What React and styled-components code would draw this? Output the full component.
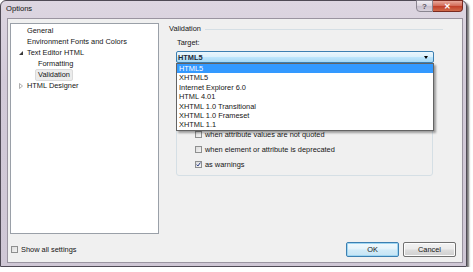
import React from 'react'
import styled, { createGlobalStyle } from 'styled-components'

const GlobalStyle = createGlobalStyle`
  html, body {
    margin: 0;
    padding: 0;
    background: #ffffff;
  }
  body {
    font-family: "Liberation Sans", Arial, sans-serif;
    font-size: 7.4px;
    color: #151515;
  }
`

const targets = [
  'HTML5',
  'XHTML5',
  'Internet Explorer 6.0',
  'HTML 4.01',
  'XHTML 1.0 Transitional',
  'XHTML 1.0 Frameset',
  'XHTML 1.1',
]

const Window = styled.div`
  width: 465px;
  height: 265px;
  border: 1px solid #4f4a55;
  border-radius: 6px 6px 0 0;
  background: linear-gradient(180deg, #ddd6e1 0%, #d2cad8 30%, #cfc7d5 100%);
  box-shadow: 2px 2px 2px rgba(0, 0, 0, 0.55);
  display: flex;
  flex-direction: column;
`

const TitleBar = styled.div`
  height: 17px;
  display: flex;
  align-items: flex-start;
  padding-left: 5px;
`

const Title = styled.span`
  line-height: 16px;
  font-size: 7.6px;
  color: #111;
`

const CaptionButtons = styled.div`
  margin-left: auto;
  margin-right: 3px;
  margin-top: -1px;
  display: flex;
`

const CaptionButton = styled.div`
  width: ${p => (p.close ? '30px' : '17px')};
  height: 12px;
  box-sizing: border-box;
  border: 1px solid ${p => (p.close ? '#7a2a20' : '#8a8590')};
  border-left: ${p => (p.close ? 'none' : '1px solid #8a8590')};
  border-radius: ${p => (p.close ? '0 0 4px 0' : '0 0 0 4px')};
  background: ${p =>
    p.close
      ? 'linear-gradient(180deg, #e9a99c 0%, #d46f5c 45%, #c2412b 55%, #d06a4a 100%)'
      : 'linear-gradient(180deg, #f3f0f5 0%, #dcd6e0 45%, #c8c0ce 55%, #d8d2dc 100%)'};
  display: flex;
  align-items: center;
  justify-content: center;
  color: ${p => (p.close ? '#ffffff' : '#5a5560')};
  font-size: 8px;
  font-weight: bold;
`

const Client = styled.div`
  flex: 1;
  margin: 0 3px 3px 6px;
  border: 1px solid #9a94a0;
  background: #f0f0f0;
  padding: 4px 2px 0 2px;
  display: flex;
  flex-direction: column;
`

const TopRow = styled.div`
  display: flex;
  height: 211px;
`

const Tree = styled.div`
  width: 147px;
  border: 1px solid #9aa0a8;
  background: #ffffff;
  padding-top: 1px;
`

const TreeRow = styled.div`
  height: 11px;
  display: flex;
  align-items: center;
  padding-left: ${p => p.indent}px;
`

const Toggle = styled.span`
  width: 8px;
  display: flex;
  align-items: center;
`

const TreeLabel = styled.span`
  line-height: 10px;
  padding: 0 2px;
  border: 1px solid ${p => (p.selected ? '#dadada' : 'transparent')};
  border-radius: 2px;
  background: ${p => (p.selected ? '#ececec' : 'transparent')};
  margin-left: -3px;
`

const Pane = styled.div`
  flex: 1;
  margin-left: 8px;
  padding-left: 2px;
  display: flex;
  flex-direction: column;
`

const SectionHeader = styled.div`
  height: 10px;
  display: flex;
  align-items: center;
  margin-right: 17px;
`

const HeaderRule = styled.div`
  flex: 1;
  height: 1px;
  background: #d5dfe5;
  margin-left: 4px;
  margin-top: 3px;
`

const Content = styled.div`
  padding-left: 7px;
  width: 258px;
`

const FieldLabel = styled.div`
  margin-top: 5px;
  line-height: 10px;
  padding-left: 1px;
`

const ComboWrap = styled.div`
  position: relative;
  margin-top: 3px;
`

const Combo = styled.div`
  height: 12px;
  box-sizing: border-box;
  border: 1px solid #3c7fb1;
  border-radius: 2px;
  background: linear-gradient(180deg, #eaf6fd 0%, #d9f0fc 48%, #bee6fd 52%, #a7d9f5 100%);
  display: flex;
  align-items: center;
  padding: 0 5px 0 1px;
  font-weight: bold;
  color: #1c2a38;
`

const ComboArrow = styled.span`
  margin-left: auto;
  width: 0;
  height: 0;
  border-left: 2.5px solid transparent;
  border-right: 2.5px solid transparent;
  border-top: 3px solid #000;
`

const DropList = styled.div`
  position: absolute;
  top: 12px;
  left: 0;
  width: 258px;
  box-sizing: border-box;
  border: 1px solid #646464;
  background: #ffffff;
  box-shadow: 2px 2px 2px rgba(0, 0, 0, 0.35);
  z-index: 2;
`

const DropItem = styled.div`
  height: 9.4px;
  line-height: 9.4px;
  padding-left: 2px;
  background: ${p => (p.active ? '#3399ff' : 'transparent')};
  color: ${p => (p.active ? '#ffffff' : '#151515')};
`

const Group = styled.div`
  margin-top: 8px;
  width: 257px;
  box-sizing: border-box;
  border: 1px solid #d5dfe5;
  border-radius: 3px;
  padding: 55px 0 3px 18px;
`

const CheckRow = styled.div`
  height: 15px;
  display: flex;
  align-items: center;
  gap: 3px;
`

const Box = styled.span`
  width: 7px;
  height: 7px;
  box-sizing: border-box;
  border: 1px solid #8e8f8f;
  background: linear-gradient(135deg, #dcdcdc 0%, #f4f4f4 100%);
  display: flex;
  align-items: center;
  justify-content: center;
`

const Footer = styled.div`
  flex: 1;
  display: flex;
  align-items: center;
  padding: 2px 4px 0 1px;
`

const Buttons = styled.div`
  margin-left: auto;
  display: flex;
  gap: 4px;
`

const Button = styled.div`
  width: 53px;
  height: 15px;
  box-sizing: border-box;
  border: 1px solid ${p => (p.primary ? '#3c7fb1' : '#707070')};
  border-radius: 2px;
  background: ${p =>
    p.primary
      ? 'linear-gradient(180deg, #f2f9fd 0%, #e4f3fb 48%, #d2ebf8 52%, #c6e4f5 100%)'
      : 'linear-gradient(180deg, #f2f2f2 0%, #ebebeb 48%, #dddddd 52%, #cfcfcf 100%)'};
  box-shadow: ${p => (p.primary ? 'inset 0 0 0 1px #9fd6f2' : 'inset 0 0 0 1px #fcfcfc')};
  display: flex;
  align-items: center;
  justify-content: center;
`

const Check = () => (
  <svg width="5" height="5" viewBox="0 0 5 5">
    <path d="M0.6 2.6 L1.9 4 L4.4 0.6" stroke="#2b3f87" strokeWidth="1" fill="none" />
  </svg>
)

const Checkbox = ({ checked, children }) => (
  <CheckRow>
    <Box>{checked && <Check />}</Box>
    <span>{children}</span>
  </CheckRow>
)

const Expanded = () => (
  <svg width="4" height="4" viewBox="0 0 4 4">
    <path d="M4 0 L4 4 L0 4 Z" fill="#3a3a3a" />
  </svg>
)

const Collapsed = () => (
  <svg width="4" height="6" viewBox="0 0 4 6">
    <path d="M0.5 0.5 L3.5 3 L0.5 5.5 Z" fill="none" stroke="#9a9a9a" strokeWidth="0.8" />
  </svg>
)

export default function App() {
  return (
    <>
      <GlobalStyle />
      <Window>
        <TitleBar>
          <Title>Options</Title>
          <CaptionButtons>
            <CaptionButton>?</CaptionButton>
            <CaptionButton close>✕</CaptionButton>
          </CaptionButtons>
        </TitleBar>
        <Client>
          <TopRow>
            <Tree>
              <TreeRow indent={8}>
                <Toggle />
                <TreeLabel>General</TreeLabel>
              </TreeRow>
              <TreeRow indent={8}>
                <Toggle />
                <TreeLabel>Environment Fonts and Colors</TreeLabel>
              </TreeRow>
              <TreeRow indent={8}>
                <Toggle>
                  <Expanded />
                </Toggle>
                <TreeLabel>Text Editor HTML</TreeLabel>
              </TreeRow>
              <TreeRow indent={19}>
                <Toggle />
                <TreeLabel>Formatting</TreeLabel>
              </TreeRow>
              <TreeRow indent={19}>
                <Toggle />
                <TreeLabel selected>Validation</TreeLabel>
              </TreeRow>
              <TreeRow indent={8}>
                <Toggle>
                  <Collapsed />
                </Toggle>
                <TreeLabel>HTML Designer</TreeLabel>
              </TreeRow>
            </Tree>
            <Pane>
              <SectionHeader>
                <span>Validation</span>
                <HeaderRule />
              </SectionHeader>
              <Content>
                <FieldLabel>Target:</FieldLabel>
                <ComboWrap>
                  <Combo>
                    <span>HTML5</span>
                    <ComboArrow />
                  </Combo>
                  <DropList>
                    {targets.map((t, i) => (
                      <DropItem key={t} active={i === 0}>
                        {t}
                      </DropItem>
                    ))}
                  </DropList>
                </ComboWrap>
                <Group>
                  <Checkbox>when attribute values are not quoted</Checkbox>
                  <Checkbox>when element or attribute is deprecated</Checkbox>
                  <Checkbox checked>as warnings</Checkbox>
                </Group>
              </Content>
            </Pane>
          </TopRow>
          <Footer>
            <Checkbox>Show all settings</Checkbox>
            <Buttons>
              <Button primary>OK</Button>
              <Button>Cancel</Button>
            </Buttons>
          </Footer>
        </Client>
      </Window>
    </>
  )
}
